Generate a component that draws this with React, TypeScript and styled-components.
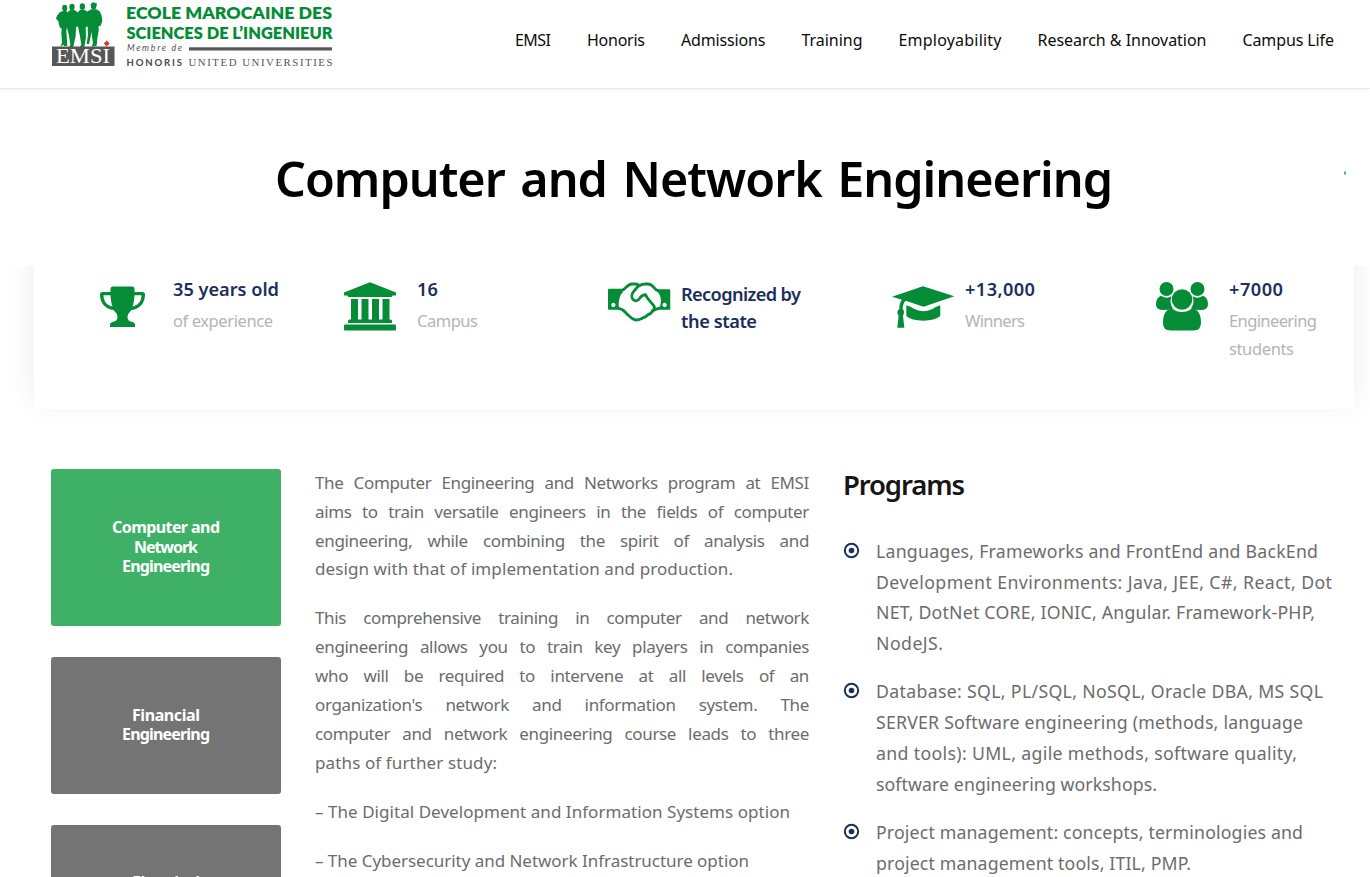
import React, { useLayoutEffect, useRef, useState } from 'react';
import styled, { createGlobalStyle } from 'styled-components';

const GREEN = '#048c37';
const NAVY = '#1b2f5c';

const GlobalStyle = createGlobalStyle`
  * { box-sizing: border-box; }
  html, body { margin: 0; padding: 0; background: #fff; }
  body {
    height: 877px;
    overflow: hidden;
    font-family: 'Noto Sans', 'Open Sans', sans-serif;
    color: #6c6c6c;
  }
  h1, h2, p, ul { margin: 0; padding: 0; font-weight: inherit; }
`;

const FitLine = styled.span`
  display: block;
  width: max-content;
  white-space: nowrap;
`;

/* One line of text whose tracking is adjusted so it spans the given width. */
function Fit({ text, width }: { text: string; width: number }) {
  const ref = useRef<HTMLSpanElement>(null);
  const [tracking, setTracking] = useState(0);
  useLayoutEffect(() => {
    if (ref.current && text.length > 1) {
      const natural = ref.current.getBoundingClientRect().width - tracking * text.length;
      setTracking((width - natural) / (text.length - 1));
    }
  }, [text, width]);
  return (
    <FitLine ref={ref} style={{ letterSpacing: tracking, marginRight: -tracking }}>
      {text}
    </FitLine>
  );
}

const Page = styled.div`
  width: 1370px;
  height: 877px;
  overflow: hidden;
`;

const Header = styled.header`
  display: flex;
  justify-content: space-between;
  height: 89px;
  padding: 0 36px 0 51px;
  border-bottom: 1px solid #e9e9e9;
  box-shadow: 0 1px 3px rgba(0, 0, 0, 0.05);
  position: relative;
  z-index: 3;
  background: #fff;
`;

const Nav = styled.nav`
  display: flex;
  gap: 36px;
  padding-top: 26px;
`;

const NavLink = styled.a`
  font-size: 16px;
  line-height: 28px;
  color: #0c0c0c;
`;

const Hero = styled.section`
  position: relative;
  z-index: 2;
  display: flex;
  align-items: center;
  height: 177px;
  padding: 1px 24px 0 275px;
  background: #fff;
`;

const Title = styled.h1`
  flex: 1;
  font-size: 48.5px;
  line-height: 64px;
  font-weight: 600;
  word-spacing: 4px;
  color: #000;
`;

const HeroMark = styled.i`
  width: 2px;
  height: 4px;
  margin-top: -10px;
  border-radius: 50%;
  background: #3fb5a0;
`;

const StatsCard = styled.section`
  display: grid;
  grid-template-columns: 244px 264px 284px 264px 1fr;
  width: 1320px;
  height: 183px;
  margin: -40px 0 0 34px;
  padding: 48px 0 0 66px;
  background: #fff;
  box-shadow: 0 -7px 28px rgba(0, 0, 0, 0.08);
`;

const Stat = styled.div`
  display: flex;
`;

const StatIcon = styled.div<{ $top: number }>`
  width: 73px;
  padding-top: ${(p) => p.$top}px;
  color: ${GREEN};
  svg { display: block; }
`;

const StatText = styled.div<{ $top?: number }>`
  padding-top: ${(p) => p.$top ?? 2}px;
`;

const StatValue = styled.div`
  font-size: 18.2px;
  line-height: 27.4px;
  font-weight: 600;
  color: ${NAVY};
`;

const StatLabel = styled.div`
  padding-top: 4px;
  font-size: 16.5px;
  line-height: 27.4px;
  color: #b4b4b4;
`;

const Main = styled.main`
  display: grid;
  grid-template-columns: 230px 494px 1fr;
  column-gap: 34px;
  padding: 60px 0 0 51px;
`;

const Side = styled.aside`
  display: flex;
  flex-direction: column;
  gap: 30.5px;
  padding-top: 0.4px;
`;

const SideButton = styled.a<{ $active?: boolean; $height: number; $inset?: number }>`
  display: flex;
  flex-direction: column;
  align-items: center;
  height: ${(p) => p.$height}px;
  padding-top: ${(p) => p.$inset ?? 49}px;
  border-radius: 3px;
  background: ${(p) => (p.$active ? '#3fb166' : '#747474')};
  color: #fff;
  font-size: 16px;
  line-height: 19.2px;
  font-weight: 700;
`;

const Article = styled.article`
  font-size: 17px;
  line-height: 28.82px;
`;

const Paragraph = styled.p`
  margin-bottom: 20.2px;
`;

const Justified = styled.span`
  display: block;
  white-space: nowrap;
  text-align: justify;
  text-align-last: justify;
  letter-spacing: -0.35px;
`;

const Programs = styled.section``;

const ProgramsTitle = styled.h2`
  font-size: 27.5px;
  line-height: 31px;
  font-weight: 600;
  color: #161616;
`;

const ProgramList = styled.ul`
  display: flex;
  flex-direction: column;
  gap: 17.6px;
  padding-top: 36px;
  list-style: none;
`;

const ProgramItem = styled.li`
  display: flex;
  font-size: 17.7px;
  line-height: 30.7px;
`;

const Bullet = styled.svg`
  width: 17px;
  height: 17px;
  margin: 6px 16px 0 0;
  flex: none;
`;

function Logo() {
  return (
    <svg width="284" height="70" viewBox="51 0 284 70">
      <g transform="translate(50 0) scale(0.3333)" fill={GREEN}>
        <ellipse cx="44" cy="24" rx="7.500" ry="10" />
        <ellipse cx="66" cy="21" rx="8" ry="10" />
        <ellipse cx="97" cy="20" rx="8" ry="10" />
        <ellipse cx="131" cy="19" rx="8" ry="10" />
        <path d="M120 15 L128 7 L140 10 L141 17 Z" />
        <path d="M40 33 L49 32 L54 40 L55 70 L49 91 L52 137 L42 139 L41 134 L31 139 L36 128 L34 98 L35 86 L29 82 L25 64 L18 56 L21 47 L30 36 Z" />
        <path d="M59 31 L74 30 L83 37 L85 58 L78 84 L77 108 L70 140 L56 146 L61 134 L56 103 L52 88 L49 64 L50 40 Z" />
        <path d="M90 30 L105 30 L113 36 L116 60 L107 84 L108 112 L103 142 L87 145 L94 134 L90 109 L85 84 L80 60 L82 38 Z" />
        <path d="M123 28 L139 28 L149 34 L155 47 L157 64 L151 79 L146 77 L146 92 L142 115 L140 137 L125 140 L129 129 L124 95 L122 110 L117 132 L110 132 L114 104 L113 78 L108 55 L110 36 Z" />
        <path d="M48 40 h68 v40 h-68 Z" />
      </g>
      <rect x="52" y="46.5" width="62.5" height="19.5" fill="#575757" />
      <text x="56" y="63.3" fontFamily="Liberation Serif, serif" fontSize="20.5" fill="#fff" textLength="54" lengthAdjust="spacingAndGlyphs">EMSI</text>
      <path d="M106.7 40.5 l3 3 l-3 3 l-3 -3 Z" fill="#d8362a" />
      <g fontFamily="Lato, sans-serif" fontWeight="800" fontSize="16.8" fill={GREEN}>
        <text x="126" y="18.6" textLength="206" lengthAdjust="spacingAndGlyphs">ECOLE MAROCAINE DES</text>
        <text x="126.5" y="38.8" textLength="206" lengthAdjust="spacingAndGlyphs">SCIENCES DE L’INGENIEUR</text>
      </g>
      <text x="127" y="51.3" fontFamily="Lato, sans-serif" fontStyle="italic" fontSize="8.8" fill="#555" textLength="55">Membre de</text>
      <rect x="189" y="47.3" width="143" height="3.2" fill="#575757" />
      <text x="126.5" y="65.7" fontFamily="Lato, sans-serif" fontWeight="700" fontSize="9.6" fill="#4a4a4a" textLength="55.5">HONORIS</text>
      <text x="188.5" y="65.7" fontFamily="Liberation Serif, serif" fontSize="10.8" fill="#555" textLength="144">UNITED UNIVERSITIES</text>
    </svg>
  );
}

function TrophyIcon() {
  return (
    <svg width="45" height="42" viewBox="0 0 45 42" fill="currentColor">
      <path d="M13 0.5 h19 q2.5 0 2.5 2.5 v3 h8 q2.5 0 2.5 2.5 c0 9 -5.500 14.500 -13.500 15.500 c-2 2.500 -4 4 -4 7 c0 3.500 2.500 4.500 5 5 c2 .5 2.500 1.500 2.500 3 v2 h-25 v-2 c0 -1.500 .5 -2.500 2.500 -3 c2.500 -.5 5 -1.500 5 -5 c0 -3 -2 -4.500 -4 -7 c-8 -1 -13.500 -6.500 -13.500 -15.500 q0 -2.500 2.500 -2.500 h8 v-3 q0 -2.500 2.500 -2.500 Z" />
      <path d="M3.500 9.300 h7 c.2 4.500 .8 8 2 11.200 c-5 -.8 -9 -4.500 -9 -11.200 Z M41.500 9.300 h-7 c-.2 4.500 -.8 8 -2 11.200 c5 -.8 9 -4.500 9 -11.200 Z" fill="#fff" />
    </svg>
  );
}

function BankIcon() {
  return (
    <svg width="52" height="49" viewBox="0 0 52 49" fill="currentColor">
      <path d="M26 0.300 L52 10.500 V13.500 H48.500 Q48.500 15 46.800 15 H5.200 Q3.500 15 3.500 13.500 H0 V10.500 Z" />
      <path d="M7 17 h7 v20.500 h3.500 V17 h7 v20.500 h3.500 V17 h7 v20.500 h3.500 V17 h7 v20.500 h1 q1.500 0 1.500 1.500 v2 H4 v-2 q0 -1.500 1.500 -1.500 H7 Z" />
      <rect x="0" y="42.500" width="52" height="6" rx="1" />
    </svg>
  );
}

function HandshakeIcon() {
  return (
    <svg width="62.600" height="40" viewBox="54 64 188 120" fill="none" stroke="currentColor" strokeWidth="8.500" strokeLinejoin="round" strokeLinecap="round">
      <path d="M96 89 C106 87 112 70 126 70 H134 C144 70 147 74 150 74 C155 70 160 70 168 70 H174 C190 70 192 87 204 90" />
      <path d="M86 143 C100 144 104 154 112 161 C120 168 128 178 138 178 C148 178 152 175 158 172 C168 170 170 166 174 162 C182 160 186 155 188 150 C194 148 198 146 206 143" />
      <path d="M150 74 C142 78 138 84 133 90 C126 97 123 108 128 115 C133 123 144 122 149 113 C153 106 157 103 167 102 C170 113 182 122 192 136 C195 141 192 147 188 150" />
      <path fill="currentColor" stroke="none" fillRule="evenodd" d="M57 84 H98 V96 C94 98 90 105 89 112 C86 122 85 132 88 147 H57 Q54 147 54 144 V87 Q54 84 57 84 Z M70 126.500 a6.500 6.500 0 1 0 .1 0 Z" />
      <path fill="currentColor" stroke="none" fillRule="evenodd" d="M202 86 H238 Q241 86 241 89 V144 Q241 147 238 147 H205 C210 139 213 130 213 121 C213 107 208 98 202 94 Z M224 126.500 a6.500 6.500 0 1 0 .1 0 Z" />
    </svg>
  );
}

function GraduationIcon() {
  return (
    <svg width="62.600" height="42" viewBox="905 76 188 126" fill="currentColor">
      <path d="M905 108 L998 77 L1092 107 L1000 138 L946 120 C941 124 937 133 937 145 Q942 149 941 155 Q941 161 938 165 L942 201 H921 L925 165 Q921 161 921 155 Q921 149 927 145 C927 132 929 124 935 117 Z" />
      <path d="M948 134 L962 139 Q975 149 999 152 Q1024 149 1036 139 L1050 134 V166 Q1034 180 999 180 Q963 180 948 166 Z" />
    </svg>
  );
}

function GroupIcon() {
  return (
    <svg width="52" height="49" viewBox="0 0 52 49" fill="currentColor">
      <path d="M5 13.800 Q10.500 17.500 15.500 14.300 Q13 21 17 26.500 Q13 28 7 28 Q0 28 0 22 Q0 16 5 13.800 Z" />
      <path d="M47 13.800 Q41.500 17.500 36.500 14.300 Q39 21 35 26.500 Q39 28 45 28 Q52 28 52 22 Q52 16 47 13.800 Z" />
      <circle cx="10.500" cy="7" r="7" />
      <circle cx="41.500" cy="7" r="7" />
      <circle cx="26" cy="17.500" r="10.300" />
      <path d="M16 26.500 Q20.500 30 26 30 Q31.500 30 36 26.500 Q45 27.500 45 41 Q45 48.500 37.500 48.500 H14.500 Q7 48.500 7 41 Q7 27.500 16 26.500 Z" />
    </svg>
  );
}

const navItems: [string, number][] = [
  ['EMSI', 36],
  ['Honoris', 58],
  ['Admissions', 84.5],
  ['Training', 61],
  ['Employability', 103],
  ['Research & Innovation', 169],
  ['Campus Life', 91.5],
];

const programs: [string, number][][] = [
  [
    ['Languages, Frameworks and FrontEnd and BackEnd', 442],
    ['Development Environments: Java, JEE, C#, React, Dot', 456],
    ['NET, DotNet CORE, IONIC, Angular. Framework-PHP,', 439],
    ['NodeJS.', 67],
  ],
  [
    ['Database: SQL, PL/SQL, NoSQL, Oracle DBA, MS SQL', 447],
    ['SERVER Software engineering (methods, language', 427],
    ['and tools): UML, agile methods, software quality,', 421],
    ['software engineering workshops.', 281],
  ],
  [
    ['Project management: concepts, terminologies and', 427],
    ['project management tools, ITIL, PMP.', 315],
  ],
];

export default function App() {
  return (
    <Page>
      <GlobalStyle />
      <Header>
        <Logo />
        <Nav>
          {navItems.map(([label, width]) => (
            <NavLink key={label}>
              <Fit text={label} width={width} />
            </NavLink>
          ))}
        </Nav>
      </Header>
      <Hero>
        <Title>
          <Fit text="Computer and Network Engineering" width={838} />
        </Title>
        <HeroMark />
      </Hero>
      <StatsCard>
        <Stat>
          <StatIcon $top={12}><TrophyIcon /></StatIcon>
          <StatText>
            <StatValue><Fit text="35 years old" width={106} /></StatValue>
            <StatLabel><Fit text="of experience" width={100} /></StatLabel>
          </StatText>
        </Stat>
        <Stat>
          <StatIcon $top={8}><BankIcon /></StatIcon>
          <StatText>
            <StatValue><Fit text="16" width={21} /></StatValue>
            <StatLabel><Fit text="Campus" width={61} /></StatLabel>
          </StatText>
        </Stat>
        <Stat>
          <StatIcon $top={7.5}><HandshakeIcon /></StatIcon>
          <StatText $top={7}>
            <StatValue>
              <Fit text="Recognized by" width={120} />
              <Fit text="the state" width={76} />
            </StatValue>
          </StatText>
        </Stat>
        <Stat>
          <StatIcon $top={11.5}><GraduationIcon /></StatIcon>
          <StatText>
            <StatValue><Fit text="+13,000" width={70} /></StatValue>
            <StatLabel><Fit text="Winners" width={60} /></StatLabel>
          </StatText>
        </Stat>
        <Stat>
          <StatIcon $top={8}><GroupIcon /></StatIcon>
          <StatText>
            <StatValue><Fit text="+7000" width={54} /></StatValue>
            <StatLabel>
              <Fit text="Engineering" width={88} />
              <Fit text="students" width={65} />
            </StatLabel>
          </StatText>
        </Stat>
      </StatsCard>
      <Main>
        <Side>
          <SideButton $active $height={157}>
            <Fit text="Computer and" width={108} />
            <Fit text="Network" width={64} />
            <Fit text="Engineering" width={88} />
          </SideButton>
          <SideButton $height={137.5}>
            <Fit text="Financial" width={68} />
            <Fit text="Engineering" width={88} />
          </SideButton>
          <SideButton $height={137.5} $inset={48}>
            <Fit text="Electrical" width={68} />
          </SideButton>
        </Side>
        <Article>
          <Paragraph>
            <Justified>The Computer Engineering and Networks program at EMSI</Justified>
            <Justified>aims to train versatile engineers in the fields of computer</Justified>
            <Justified>engineering, while combining the spirit of analysis and</Justified>
            <Fit text="design with that of implementation and production." width={418} />
          </Paragraph>
          <Paragraph>
            <Justified>This comprehensive training in computer and network</Justified>
            <Justified>engineering allows you to train key players in companies</Justified>
            <Justified>who will be required to intervene at all levels of an</Justified>
            <Justified>organization's network and information system. The</Justified>
            <Justified>computer and network engineering course leads to three</Justified>
            <Fit text="paths of further study:" width={182} />
          </Paragraph>
          <Paragraph>
            <Fit text="– The Digital Development and Information Systems option" width={475} />
          </Paragraph>
          <Paragraph>
            <Fit text="– The Cybersecurity and Network Infrastructure option" width={434} />
          </Paragraph>
        </Article>
        <Programs>
          <ProgramsTitle>
            <Fit text="Programs" width={122} />
          </ProgramsTitle>
          <ProgramList>
            {programs.map((lines) => (
              <ProgramItem key={lines[0][0]}>
                <Bullet viewBox="0 0 17 17">
                  <circle cx="8.500" cy="8.500" r="6.700" fill="none" stroke={NAVY} strokeWidth="2" />
                  <circle cx="8.500" cy="8.500" r="2.800" fill={NAVY} />
                </Bullet>
                <div>
                  {lines.map(([text, width]) => (
                    <Fit key={text} text={text} width={width} />
                  ))}
                </div>
              </ProgramItem>
            ))}
          </ProgramList>
        </Programs>
      </Main>
    </Page>
  );
}
